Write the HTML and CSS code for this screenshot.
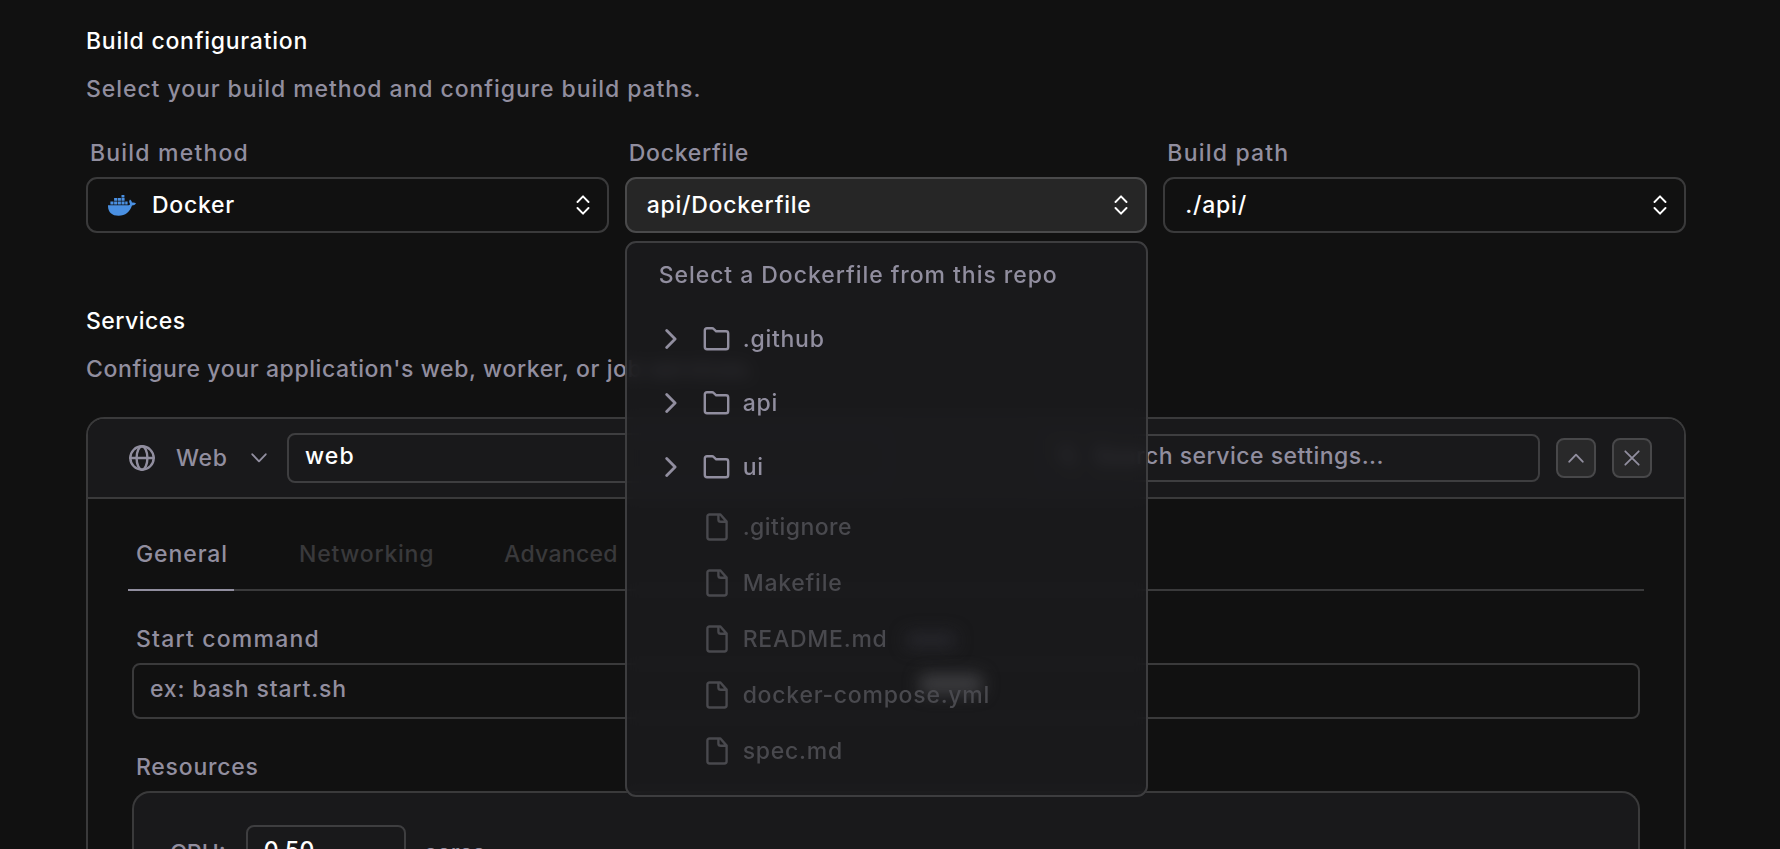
FILE: index.html
```html
<!DOCTYPE html>
<html lang="en">
<head>
<meta charset="utf-8">
<title>Build configuration</title>
<link rel="stylesheet" href="styles.css">
</head>
<body>
<svg class="sprite" aria-hidden="true">
  <symbol id="i-updown" viewBox="0 0 14 20"><path d="M1.5 7 7 1.3 12.5 7M1.5 13 7 18.7 12.5 13"/></symbol>
  <symbol id="i-right" viewBox="0 0 12 20"><path d="M1.7 1.5 10.1 10 1.7 18.5"/></symbol>
  <symbol id="i-down" viewBox="0 0 16 10"><path d="M1.3 1.3 8 8.3 14.7 1.3"/></symbol>
  <symbol id="i-up" viewBox="0 0 16 10"><path d="M1.3 8.7 8 1.7 14.7 8.7"/></symbol>
  <symbol id="i-close" viewBox="0 0 16 16"><path d="M1.3 1.3 14.7 14.7M14.7 1.3 1.3 14.7"/></symbol>
  <symbol id="i-folder" viewBox="0 0 26 24"><path d="M1.3 20V3.5Q1.3 1.3 3.5 1.3H8.6Q9.5 1.3 10.1 1.9L12.7 4.3H22.5Q24.7 4.3 24.7 6.5V20Q24.7 22.3 22.5 22.3H3.5Q1.3 22.3 1.3 20Z"/></symbol>
  <symbol id="i-file" viewBox="0 0 22 28"><path d="M12.4 1.5H3.6Q1.4 1.5 1.4 3.7V24.3Q1.4 26.5 3.6 26.5H18.4Q20.6 26.5 20.6 24.3V8.6L14.4 1.5ZM12.4 1.5V6.4Q12.4 8.7 14.7 8.7H20.6"/></symbol>
  <symbol id="i-globe" viewBox="0 0 26 26"><circle cx="13" cy="13" r="11.7"/><ellipse cx="13" cy="13" rx="5.4" ry="11.7"/><path d="M1.3 13H24.7"/></symbol>
  <symbol id="i-search" viewBox="0 0 20 20"><circle cx="8.5" cy="8.5" r="6.5"/><path d="M13.5 13.5 18.5 18.5"/></symbol>
  <symbol id="i-docker" viewBox="0 0 28 21">
    <path d="M0 10.2H20.7C21.7 9.9 22 9.4 22.1 9C20.8 7.4 21 5.6 22 4.4C23.3 5.3 23.9 6.4 23.9 7.6C25.4 7.3 26.9 7.6 28 8.3C27.2 9.9 25.7 10.4 24 10.4C21.9 16.9 17.4 20.7 10.6 20.7C3.6 20.7-.2 17 0 10.2Z"/>
    <path d="M2.4 6.4h3.1v3.1H2.4zM6.1 6.4h3.1v3.1H6.1zM9.8 6.4h3.1v3.1H9.8zM13.5 6.4h3.1v3.1h-3.1zM17.2 6.4h2.4v3.1h-2.4zM6.1 3.1h3.1v2.7H6.1zM9.8 3.1h3.1v2.7H9.8zM13.5 3.1h3.1v2.7h-3.1zM13.5 0h2.9v2.5h-2.9z"/>
  </symbol>
</svg>

<main class="page">
  <section>
    <h2 class="title">Build configuration</h2>
    <p class="desc desc-build">Select your build method and configure build paths.</p>
    <div class="fields">
      <div>
        <div class="label loose">Build method</div>
        <div class="select">
          <svg class="docker"><use href="#i-docker"/></svg>
          <span class="select-value">Docker</span>
          <svg class="updown"><use href="#i-updown"/></svg>
        </div>
      </div>
      <div class="field-open">
        <div class="label">Dockerfile</div>
        <div class="select select-active">
          <span class="select-value">api/Dockerfile</span>
          <svg class="updown"><use href="#i-updown"/></svg>
        </div>
        <div class="popup">
          <i class="glow glow-dim"></i>
          <i class="glow glow-bright"></i>
          <div class="popup-title">Select a Dockerfile from this repo</div>
          <div class="row"><svg class="chev"><use href="#i-right"/></svg><svg class="folder"><use href="#i-folder"/></svg><span>.github</span></div>
          <div class="row"><svg class="chev"><use href="#i-right"/></svg><svg class="folder"><use href="#i-folder"/></svg><span>api</span></div>
          <div class="row"><svg class="chev"><use href="#i-right"/></svg><svg class="folder"><use href="#i-folder"/></svg><span>ui</span></div>
          <div class="row file"><svg class="doc"><use href="#i-file"/></svg><span class="tight">.gitignore</span></div>
          <div class="row file"><svg class="doc"><use href="#i-file"/></svg><span>Makefile</span></div>
          <div class="row file"><svg class="doc"><use href="#i-file"/></svg><span>README.md</span></div>
          <div class="row file"><svg class="doc"><use href="#i-file"/></svg><span>docker-compose.yml</span></div>
          <div class="row file"><svg class="doc"><use href="#i-file"/></svg><span>spec.md</span></div>
        </div>
      </div>
      <div>
        <div class="label loose">Build path</div>
        <div class="select">
          <span class="select-value">./api/</span>
          <svg class="updown"><use href="#i-updown"/></svg>
        </div>
      </div>
    </div>
  </section>

  <section class="services">
    <h2 class="title tight">Services</h2>
    <p class="desc desc-services">Configure your application's web, worker, or job services.</p>
    <div class="card">
      <div class="card-head">
        <svg class="globe"><use href="#i-globe"/></svg>
        <span class="type">Web</span>
        <svg class="arrow"><use href="#i-down"/></svg>
        <div class="name-input">web</div>
        <div class="search"><svg class="lens"><use href="#i-search"/></svg><span class="tight">Search service settings...</span></div>
        <div class="icon-btn"><svg class="arrow"><use href="#i-up"/></svg></div>
        <div class="icon-btn"><svg class="cross"><use href="#i-close"/></svg></div>
      </div>
      <div class="card-body">
        <div class="tabs">
          <div class="tab tab-active">General</div>
          <div class="tab tab-networking">Networking</div>
          <div class="tab tab-advanced">Advanced</div>
        </div>
        <div class="form">
          <div class="label loose">Start command</div>
          <div class="text-input">ex: bash start.sh</div>
          <div class="label label-resources">Resources</div>
          <div class="resources">
            <span class="cpu">CPU:</span>
            <div class="cpu-input">0.50</div>
            <span class="cpu">cores</span>
          </div>
        </div>
      </div>
    </div>
  </section>
</main>
</body>
</html>
```
FILE: styles.css
```css
* { box-sizing: border-box; }

html { overflow: hidden; }

body {
  margin: 0;
  height: 849px;
  overflow: hidden;
  background: #111111;
  color: #918e9f;
  font: 450 23px/32px Inter, "Work Sans", sans-serif;
  letter-spacing: 0.75px;
  white-space: nowrap;
}

svg {
  flex: none;
  fill: none;
  stroke: currentColor;
  stroke-width: 2.4;
  stroke-linecap: round;
  stroke-linejoin: round;
}

.sprite { position: absolute; width: 0; height: 0; }

.page {
  width: 1600px;
  height: 849px;
  margin-left: 86px;
  padding-top: 25px;
}

.title { margin: 0; font-size: 23px; font-weight: 450; color: #ffffff; }
.desc { margin: 16px 0 0; }
.desc-build { letter-spacing: 0.93px; }
.desc-services { letter-spacing: 0.6px; }
.tight { letter-spacing: 0.48px; }

.fields {
  display: grid;
  grid-template-columns: repeat(3, 1fr);
  gap: 16px;
  margin-top: 32px;
}

.label { margin: 0 0 8px 4px; }
.loose { letter-spacing: 1.2px; }

.select {
  display: flex;
  align-items: center;
  height: 56px;
  padding: 0 17px 0 20px;
  border: 2px solid #3a3a3b;
  border-radius: 11px;
  color: #ffffff;
}
.select-active { background: #262626; border-color: #4a4a4b; }
.select-value { flex: 1; }
.docker {
  width: 28px;
  height: 21px;
  margin-right: 16px;
  fill: #4a90e2;
  stroke: none;
}
.updown { width: 14px; height: 20px; stroke-width: 1.9; }

.field-open { position: relative; }

.popup {
  position: absolute;
  z-index: 2;
  top: 104px;
  left: 0;
  width: 523px;
  height: 556px;
  border: 2px solid #3d3d3f;
  border-radius: 11px;
  background: rgba(27, 27, 30, 0.8);
  backdrop-filter: blur(8px);
}
.popup-title { position: relative; padding: 16px 0 16px 32px; letter-spacing: 0.95px; }
.row {
  position: relative;
  display: flex;
  align-items: center;
  height: 64px;
  padding-left: 38px;
}
.chev { width: 12px; height: 20px; margin-right: 26px; stroke-width: 2.8; }
.folder { width: 27px; height: 24px; margin-right: 13px; }
.row.file { height: 56px; padding-left: 79px; color: #49494e; }
.doc { width: 22px; height: 28px; margin-right: 15px; }

.glow { position: absolute; border-radius: 8px; filter: blur(8px); }
.glow-dim { top: 389px; left: 278px; width: 52px; height: 16px; background: #26262b; }
.glow-bright { top: 431px; left: 292px; width: 64px; height: 20px; background: #3d3d40; }

.services { margin-top: 72px; }

.card {
  height: 432px;
  margin-top: 32px;
  border: 2px solid #3a3a3b;
  border-bottom: 0;
  border-radius: 18px 18px 0 0;
  overflow: hidden;
}
.card-head {
  display: flex;
  align-items: center;
  height: 80px;
  padding: 0 32px 0 41px;
  border-bottom: 2px solid #3a3a3b;
  background: #19191b;
}
.globe { width: 26px; height: 26px; margin-right: 21px; }
.type { width: 75px; letter-spacing: 0.7px; }
.arrow { width: 16px; height: 10px; stroke-width: 1.9; }
.name-input {
  width: 603px;
  height: 50px;
  margin-left: 20px;
  padding: 5px 16px;
  border: 2px solid #3e3e40;
  border-radius: 8px;
  color: #ffffff;
  letter-spacing: 1.1px;
}
.search {
  display: flex;
  align-items: center;
  width: 500px;
  height: 48px;
  margin-left: auto;
  padding: 0 0 4px 16px;
  border: 2px solid #3e3e40;
  border-radius: 8px;
}
.lens { width: 20px; height: 20px; margin-right: 15px; }
.icon-btn {
  display: flex;
  align-items: center;
  justify-content: center;
  width: 40px;
  height: 40px;
  margin-left: 16px;
  border: 2px solid #48484a;
  border-radius: 8px;
  background: #29292a;
}
.cross { width: 16px; height: 16px; stroke-width: 1.8; }

.card-body { padding: 39px 40px 0; }
.tabs { display: flex; border-bottom: 2px solid #3a3a3b; }
.tab {
  height: 53px;
  margin: 0 57px -2px 0;
  padding: 0 7px 0 8px;
  color: #39393b;
}
.tab-active { color: #918e9f; border-bottom: 2px solid #918e9f; letter-spacing: 0.9px; width: 106px; }
.tab-networking { width: 148px; }
.tab-advanced { letter-spacing: 0.3px; }

.form { margin: 32px 4px 0; }
.text-input {
  height: 56px;
  padding: 8px 16px;
  border: 2px solid #3a3a3b;
  border-radius: 8px;
  letter-spacing: 0.85px;
}
.label-resources { margin-top: 32px; }
.resources {
  display: flex;
  align-items: flex-start;
  height: 58px;
  padding: 32px 36px 0;
  border: 2px solid #3a3a3b;
  border-bottom: 0;
  border-radius: 18px 18px 0 0;
  background: #19191b;
  overflow: hidden;
}
.cpu { margin-top: 12px; letter-spacing: 0; }
.cpu-input {
  width: 160px;
  height: 56px;
  margin: 0 18px 0 20px;
  padding: 7px 16px;
  border: 2px solid #3e3e40;
  border-radius: 8px;
  color: #ffffff;
  letter-spacing: 0.2px;
}
```
